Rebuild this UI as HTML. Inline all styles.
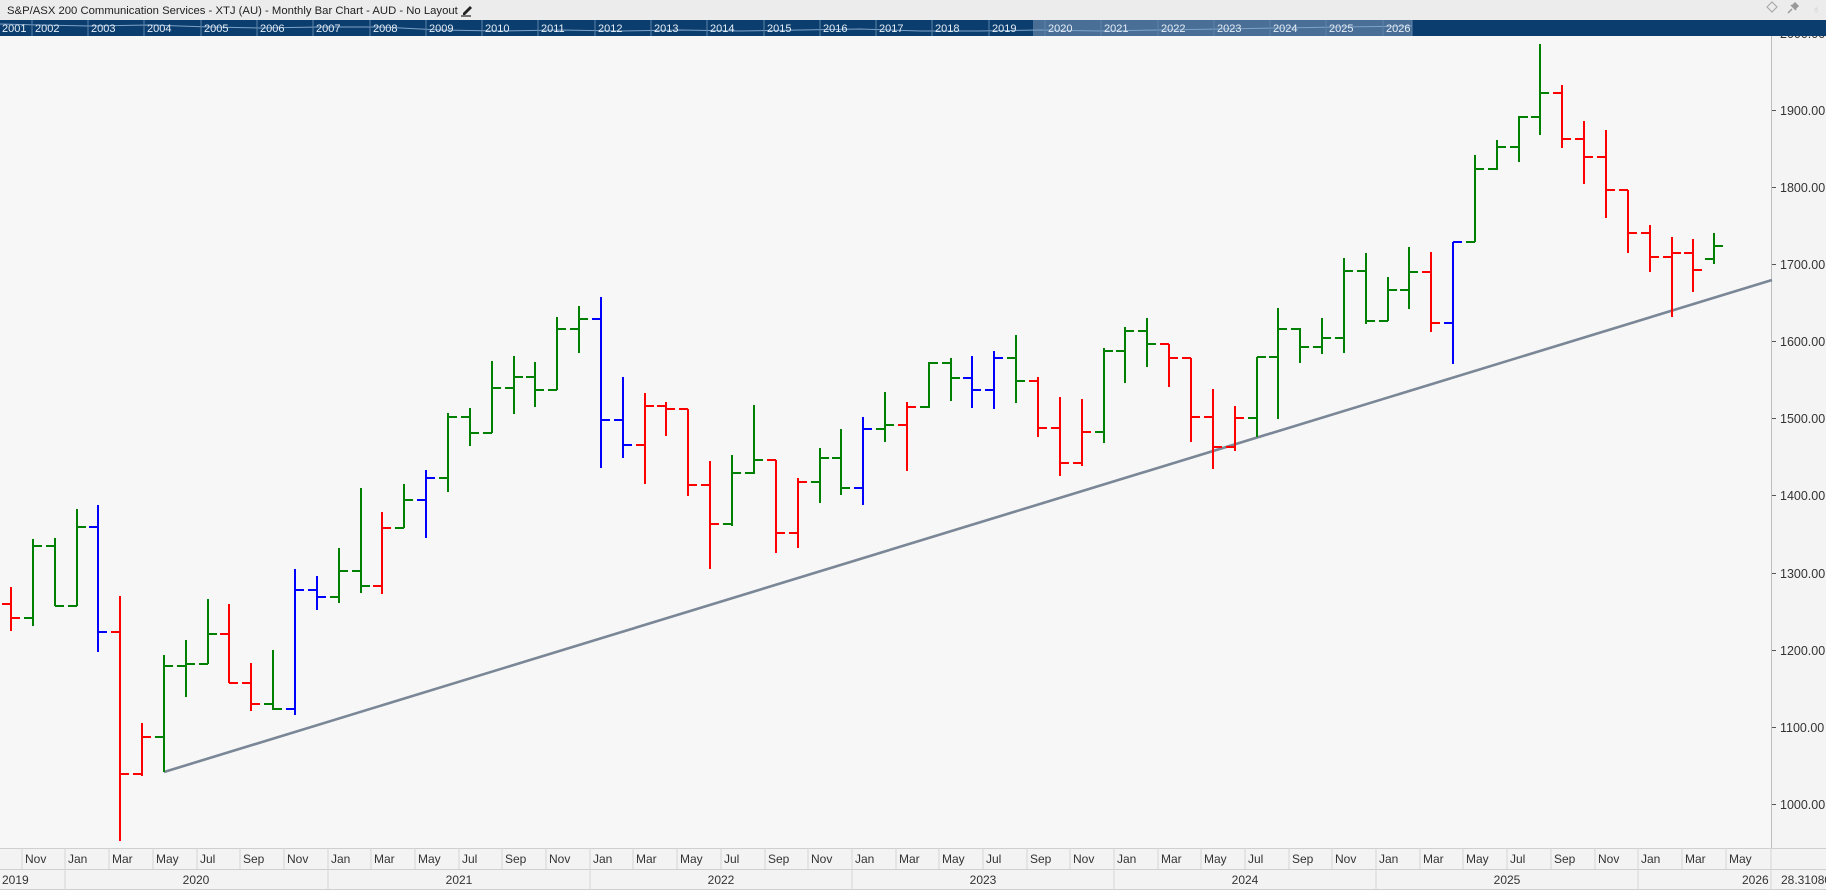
<!DOCTYPE html>
<html><head><meta charset="utf-8"><style>
html,body{margin:0;padding:0;width:1826px;height:890px;overflow:hidden;background:#f7f7f7}
svg{display:block}
text{font-family:"Liberation Sans",sans-serif}
</style></head><body>
<svg width="1826" height="890" viewBox="0 0 1826 890" xmlns="http://www.w3.org/2000/svg">
<rect x="0" y="0" width="1826" height="890" fill="#f7f7f7"/>
<rect x="1771" y="36" width="55" height="812" fill="#f4f4f4"/>
<line x1="1771.5" y1="36" x2="1771.5" y2="848" stroke="#bdbdbd" stroke-width="1"/>

<g font-size="12.5" fill="#333">
<text x="1780" y="38">2000.00</text>
<text x="1780" y="115">1900.00</text>
<text x="1780" y="192">1800.00</text>
<text x="1780" y="269">1700.00</text>
<text x="1780" y="346">1600.00</text>
<text x="1780" y="423">1500.00</text>
<text x="1780" y="500">1400.00</text>
<text x="1780" y="578">1300.00</text>
<text x="1780" y="655">1200.00</text>
<text x="1780" y="732">1100.00</text>
<text x="1780" y="809">1000.00</text>
</g>
<g stroke="#555" stroke-width="1">
<path d="M1772 110.5h4M1772 187.5h4M1772 264.5h4M1772 341.5h4M1772 418.5h4M1772 495.5h4M1772 573.5h4M1772 650.5h4M1772 727.5h4M1772 804.5h4"/>
</g>

<line x1="164" y1="772" x2="1772" y2="280" stroke="#7a8797" stroke-width="2.6"/>

<g fill="none" stroke-width="2">
<path stroke="#ff0000" d="
M11 587V631M2 604h9M11 618h9
M120 596V841M111 632h9M120 774h9
M142 723V776M133 774h9M142 737h9
M229 604V683M220 634h9M229 683h9
M251 663V711M242 683h9M251 704h9
M382 512V594M373 586h9M382 528h9
M645 393V484M636 445h9M645 406h9
M666 402V436M657 406h9M666 409h9
M688 409V496M679 409h9M688 485h9
M710 461V569M701 485h9M710 524h9
M776 460V553M767 460h9M776 533h9
M798 478V548M789 533h9M798 482h9
M907 402V471M898 425h9M907 407h9
M1038 377V437M1029 381h9M1038 428h9
M1060 397V476M1051 428h9M1060 463h9
M1082 399V466M1073 463h9M1082 432h9
M1169 344V387M1160 344h9M1169 358h9
M1191 358V442M1182 358h9M1191 417h9
M1213 389V469M1204 417h9M1213 447h9
M1235 406V451M1226 447h9M1235 418h9
M1431 252V332M1422 272h9M1431 323h9
M1562 85V148M1553 93h9M1562 139h9
M1584 121V184M1575 139h9M1584 157h9
M1606 130V218M1597 157h9M1606 190h9
M1628 190V253M1619 190h9M1628 233h9
M1650 225V272M1641 233h9M1650 257h9
M1672 237V317M1663 257h9M1672 253h9
M1693 239V292M1684 253h9M1693 270h9"/>
<path stroke="#0000ff" d="
M98 505V652M89 527h9M98 632h9
M295 569V715M286 709h9M295 590h9
M317 576V610M308 590h9M317 597h9
M426 470V538M417 500h9M426 478h9
M601 297V468M592 319h9M601 420h9
M623 377V458M614 420h9M623 445h9
M863 417V505M854 488h9M863 429h9
M972 356V408M963 378h9M972 390h9
M994 351V409M985 390h9M994 358h9
M1453 242V364M1444 323h9M1453 242h9"/>
<path stroke="#008000" d="
M33 539V626M24 618h9M33 546h9
M55 538V606M46 546h9M55 606h9
M77 509V606M68 606h9M77 527h9
M164 655V772M155 737h9M164 666h9
M186 640V697M177 666h9M186 664h9
M208 599V664M199 664h9M208 634h9
M273 650V710M264 704h9M273 709h9
M339 548V603M330 597h9M339 571h9
M361 488V593M352 571h9M361 586h9
M404 484V528M395 528h9M404 500h9
M448 413V492M439 478h9M448 417h9
M470 408V446M461 417h9M470 433h9
M492 361V433M483 433h9M492 388h9
M514 356V414M505 388h9M514 377h9
M535 362V407M526 377h9M535 390h9
M557 317V390M548 390h9M557 329h9
M579 306V353M570 329h9M579 319h9
M732 455V526M723 524h9M732 473h9
M754 405V474M745 473h9M754 460h9
M820 448V503M811 482h9M820 458h9
M841 429V495M832 458h9M841 488h9
M885 392V442M876 429h9M885 425h9
M929 362V408M920 407h9M929 363h9
M951 358V401M942 363h9M951 378h9
M1016 335V403M1007 358h9M1016 381h9
M1104 348V443M1095 432h9M1104 351h9
M1125 327V383M1116 351h9M1125 331h9
M1147 318V367M1138 331h9M1147 344h9
M1257 357V437M1248 418h9M1257 357h9
M1278 308V419M1269 357h9M1278 329h9
M1300 328V363M1291 329h9M1300 347h9
M1322 318V354M1313 347h9M1322 338h9
M1344 258V353M1335 338h9M1344 271h9
M1366 253V324M1357 271h9M1366 321h9
M1388 277V321M1379 321h9M1388 290h9
M1409 247V309M1400 290h9M1409 272h9
M1475 155V242M1466 242h9M1475 169h9
M1497 140V170M1488 169h9M1497 147h9
M1519 116V162M1510 147h9M1519 117h9
M1540 44V135M1531 117h9M1540 93h9
M1714 233V264M1705 259h9M1714 246h9"/>
</g>

<rect x="0" y="0" width="1826" height="20" fill="#ececec"/>
<text x="7" y="14" font-size="11.3" fill="#222">S&amp;P/ASX 200 Communication Services - XTJ (AU) - Monthly Bar Chart - AUD - No Layout</text>
<path d="M463 13l7-7 2 2-7 7h-2z" fill="#222"/><path d="M461 16h10" stroke="#222" stroke-width="1.2"/>
<path d="M1767 7l5-5 5 5-5 5z" fill="none" stroke="#aaa" stroke-width="1.2"/>
<path d="M1788 13l4-4m-1-4l5 5m-4-4l3-3 3 3-3 3z" stroke="#999" stroke-width="1.5" fill="#999"/>
<text x="1812" y="13" font-size="11" fill="#ccc">♁</text>

<rect x="0" y="20" width="1826" height="16" fill="#0b3d6e"/>
<rect x="1033" y="20" width="379" height="16" fill="#4a6f97"/>
<polyline fill="none" stroke="#7fa2c6" stroke-width="1" points="0,24 40,25 90,26 150,25 210,27 260,28 320,27 380,27 440,30 500,31 560,30 620,31 680,30 740,31 800,30 860,29 920,31 980,31 1040,30 1100,31 1160,30 1220,29 1280,28 1340,27 1412,26"/>
<g stroke="#5d83ab" stroke-width="1">
<path d="M32 20v16M88 20v16M144 20v16M201 20v16M257 20v16M313 20v16M370 20v16M426 20v16M482 20v16M538 20v16M595 20v16M651 20v16M707 20v16M764 20v16M820 20v16M876 20v16M932 20v16M989 20v16M1045 20v16M1101 20v16M1158 20v16M1214 20v16M1270 20v16M1326 20v16M1383 20v16M1412 20v16"/>
</g>
<g font-size="11" fill="#e6eef6">
<text x="2" y="32">2001</text><text x="35" y="32">2002</text><text x="91" y="32">2003</text><text x="147" y="32">2004</text><text x="204" y="32">2005</text><text x="260" y="32">2006</text><text x="316" y="32">2007</text><text x="373" y="32">2008</text><text x="429" y="32">2009</text><text x="485" y="32">2010</text><text x="541" y="32">2011</text><text x="598" y="32">2012</text><text x="654" y="32">2013</text><text x="710" y="32">2014</text><text x="767" y="32">2015</text><text x="823" y="32">2016</text><text x="879" y="32">2017</text><text x="935" y="32">2018</text><text x="992" y="32">2019</text><text x="1048" y="32">2020</text><text x="1104" y="32">2021</text><text x="1161" y="32">2022</text><text x="1217" y="32">2023</text><text x="1273" y="32">2024</text><text x="1329" y="32">2025</text><text x="1386" y="32">2026</text>
</g>

<rect x="0" y="848" width="1826" height="42" fill="#f3f3f3"/>
<path d="M0 848.5H1826M0 869.5H1826M0 889.5H1826" stroke="#cfcfcf" stroke-width="1"/>
<g stroke="#d4d4d4" stroke-width="1">
<path d="M22 848v21M65 848v21M109 848v21M153 848v21M197 848v21M240 848v21M284 848v21M328 848v21M371 848v21M415 848v21M459 848v21M502 848v21M546 848v21M590 848v21M633 848v21M677 848v21M721 848v21M765 848v21M808 848v21M852 848v21M896 848v21M939 848v21M983 848v21M1027 848v21M1070 848v21M1114 848v21M1158 848v21M1201 848v21M1245 848v21M1289 848v21M1332 848v21M1376 848v21M1420 848v21M1463 848v21M1507 848v21M1551 848v21M1595 848v21M1638 848v21M1682 848v21M1726 848v21"/>
<path d="M65 869v21M328 869v21M590 869v21M852 869v21M1114 869v21M1376 869v21M1638 869v21M1771 848v42"/>
</g>
<g font-size="12" fill="#333">
<text x="25" y="863">Nov</text><text x="68" y="863">Jan</text><text x="112" y="863">Mar</text><text x="156" y="863">May</text><text x="200" y="863">Jul</text><text x="243" y="863">Sep</text><text x="287" y="863">Nov</text>
<text x="331" y="863">Jan</text><text x="374" y="863">Mar</text><text x="418" y="863">May</text><text x="462" y="863">Jul</text><text x="505" y="863">Sep</text><text x="549" y="863">Nov</text>
<text x="593" y="863">Jan</text><text x="636" y="863">Mar</text><text x="680" y="863">May</text><text x="724" y="863">Jul</text><text x="768" y="863">Sep</text><text x="811" y="863">Nov</text>
<text x="855" y="863">Jan</text><text x="899" y="863">Mar</text><text x="942" y="863">May</text><text x="986" y="863">Jul</text><text x="1030" y="863">Sep</text><text x="1073" y="863">Nov</text>
<text x="1117" y="863">Jan</text><text x="1161" y="863">Mar</text><text x="1204" y="863">May</text><text x="1248" y="863">Jul</text><text x="1292" y="863">Sep</text><text x="1335" y="863">Nov</text>
<text x="1379" y="863">Jan</text><text x="1423" y="863">Mar</text><text x="1466" y="863">May</text><text x="1510" y="863">Jul</text><text x="1554" y="863">Sep</text><text x="1598" y="863">Nov</text>
<text x="1641" y="863">Jan</text><text x="1685" y="863">Mar</text><text x="1729" y="863">May</text>
<text x="2" y="884">2019</text>
<text x="196" y="884" text-anchor="middle">2020</text>
<text x="459" y="884" text-anchor="middle">2021</text>
<text x="721" y="884" text-anchor="middle">2022</text>
<text x="983" y="884" text-anchor="middle">2023</text>
<text x="1245" y="884" text-anchor="middle">2024</text>
<text x="1507" y="884" text-anchor="middle">2025</text>
<text x="1742" y="884">2026</text>
<text x="1781" y="884">28.31080</text>
</g>
</svg>
</body></html>
